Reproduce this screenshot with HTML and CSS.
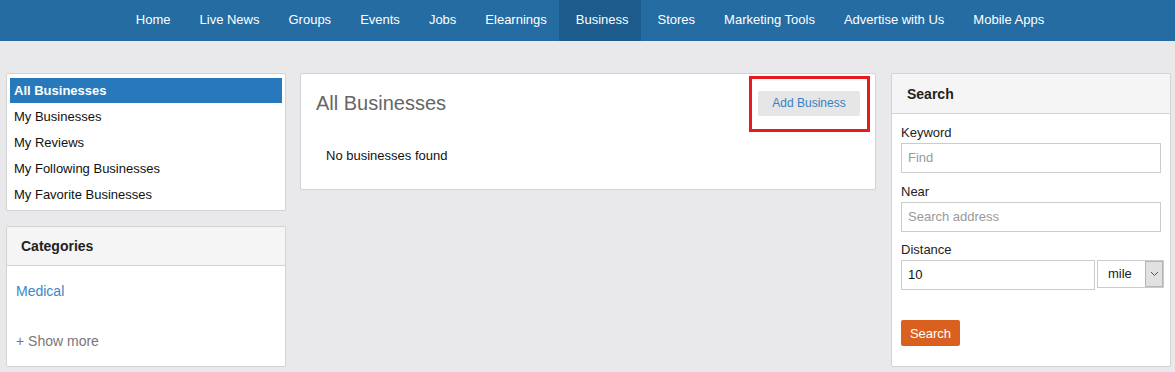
FILE: index.html
```html
<!DOCTYPE html>
<html>
<head>
<meta charset="utf-8">
<link rel="stylesheet" href="styles.css">
</head>
<body>
<nav class="topnav">
  <a class="nav-item">Home</a>
  <a class="nav-item">Live News</a>
  <a class="nav-item">Groups</a>
  <a class="nav-item">Events</a>
  <a class="nav-item">Jobs</a>
  <a class="nav-item">Elearnings</a>
  <a class="nav-item active">Business</a>
  <a class="nav-item">Stores</a>
  <a class="nav-item">Marketing Tools</a>
  <a class="nav-item">Advertise with Us</a>
  <a class="nav-item">Mobile Apps</a>
</nav>
<div class="layout">
  <aside class="col-left">
    <div class="panel menu-panel">
      <div class="menu-item selected">All Businesses</div>
      <div class="menu-item">My Businesses</div>
      <div class="menu-item">My Reviews</div>
      <div class="menu-item">My Following Businesses</div>
      <div class="menu-item">My Favorite Businesses</div>
    </div>
    <div class="panel cat-panel">
      <div class="panel-head">Categories</div>
      <div class="cat-body">
        <a class="cat-link">Medical</a>
        <a class="show-more">+ Show more</a>
      </div>
    </div>
  </aside>
  <main class="col-main">
    <div class="panel main-panel">
      <div class="main-head">
        <h1 class="main-title">All Businesses</h1>
        <div class="btn-wrap">
          <button class="btn-add">Add Business</button>
          <span class="highlight-box"></span>
        </div>
      </div>
      <div class="main-body">No businesses found</div>
    </div>
  </main>
  <aside class="col-right">
    <div class="panel search-panel">
      <div class="panel-head search-head">Search</div>
      <div class="search-body">
        <label class="field-label">Keyword</label>
        <div class="input full"><span class="ph">Find</span></div>
        <label class="field-label">Near</label>
        <div class="input full near"><span class="ph">Search address</span></div>
        <label class="field-label">Distance</label>
        <div class="dist-row">
          <div class="input dist"><span class="val">10</span></div>
          <div class="select"><span class="sel-val">mile</span><span class="sel-arrow"><svg width="9" height="6" viewBox="0 0 9 6"><path d="M1 1 L4.5 4.5 L8 1" fill="none" stroke="#555" stroke-width="1"/></svg></span></div>
        </div>
        <button class="btn-search">Search</button>
      </div>
    </div>
  </aside>
</div>
</body>
</html>
```
FILE: styles.css
```css
* { box-sizing: border-box; }
html, body { margin: 0; padding: 0; }
body {
  background: #e9e9eb;
  font-family: "Liberation Sans", Arial, sans-serif;
  font-size: 13px;
  color: #222;
  height: 372px;
  overflow: hidden;
}
.topnav {
  height: 41px;
  background: #256ca3;
  display: flex;
  justify-content: center;
}
.nav-item {
  display: block;
  color: #fff;
  font-size: 13px;
  line-height: 40px;
  padding: 0 12px 0 17px;
}
.nav-item.active {
  background: #1c5b8c;
}
.layout {
  display: grid;
  grid-template-columns: 280px 576px 281px;
  column-gap: 14px;
  padding: 32px 0 0 6px;
  align-items: start;
}
.col-right { margin-left: 1px; }
.col-left { display: flex; flex-direction: column; gap: 15px; }
.panel {
  background: #fff;
  border: 1px solid #d3d3d3;
  border-radius: 2px;
}
.menu-panel { padding: 4px 3px 2px; }
.menu-item {
  height: 26px;
  line-height: 25px;
  padding: 0 4px;
  color: #111;
}
.menu-item.selected {
  background: #2779bb;
  color: #fff;
  font-weight: bold;
  height: 25px;
  line-height: 25px;
  margin-bottom: 1px;
}
.panel-head {
  background: #f5f5f5;
  border-bottom: 1px solid #d3d3d3;
  font-weight: bold;
  font-size: 14px;
  color: #222;
  height: 39px;
  line-height: 38px;
  padding-left: 14px;
}
.search-head {
  height: 40px;
  line-height: 40px;
  padding-left: 15px;
}
.cat-panel { height: 141px; }
.cat-body {
  padding: 16px 10px 0 9px;
  display: flex;
  flex-direction: column;
  align-items: flex-start;
}
.cat-link { color: #3b87c9; font-size: 14px; line-height: 18px; }
.show-more { color: #777; font-size: 14px; line-height: 18px; margin-top: 32px; }
.main-panel { height: 117px; }
.main-head {
  display: flex;
  justify-content: space-between;
  align-items: center;
  padding: 14px 15px 0 15px;
}
.main-title {
  margin: 0;
  font-weight: normal;
  font-size: 20px;
  line-height: 30px;
  color: #666;
}
.btn-wrap { position: relative; }
.btn-add {
  display: block;
  border: 0;
  background: #e6e6e6;
  color: #3a7fc1;
  font-family: "Liberation Sans", Arial, sans-serif;
  font-size: 12px;
  height: 25px;
  width: 102px;
  border-radius: 2px;
  padding: 0;
}
.highlight-box {
  position: absolute;
  left: -9px;
  top: -15px;
  width: 121px;
  height: 56px;
  border: 3px solid #e8191f;
}
.main-body {
  padding: 29px 25px 0;
  line-height: 18px;
  color: #111;
}
.search-panel { height: 294px; }
.search-body {
  padding: 10px 10px 0 9px;
  display: flex;
  flex-direction: column;
  align-items: flex-start;
}
.field-label {
  display: block;
  line-height: 18px;
  color: #222;
  margin-bottom: 1px;
}
.input {
  height: 30px;
  border: 1px solid #ccc;
  background: #fff;
  line-height: 28px;
  padding: 0 6px;
}
.input.full { width: 260px; margin-bottom: 10px; }
.input.near { margin-bottom: 9px; }
.ph { color: #999; }
.val { color: #111; }
.dist-row { display: flex; gap: 2px; margin-bottom: 30px; }
.input.dist { width: 194px; }
.select {
  width: 67px;
  height: 28px;
  border: 1px solid #ccc;
  display: flex;
  justify-content: space-between;
  background: #fff;
}
.sel-val { line-height: 26px; padding-left: 10px; color: #222; }
.sel-arrow {
  width: 18px;
  background: #e1e1e1;
  border: 1px solid #b5b5b5;
  display: flex;
  align-items: center;
  justify-content: center;
}
.btn-search {
  border: 0;
  background: #d9601f;
  color: #fff;
  font-family: "Liberation Sans", Arial, sans-serif;
  font-size: 13px;
  height: 26px;
  width: 59px;
  border-radius: 2px;
  padding: 0;
}
```
